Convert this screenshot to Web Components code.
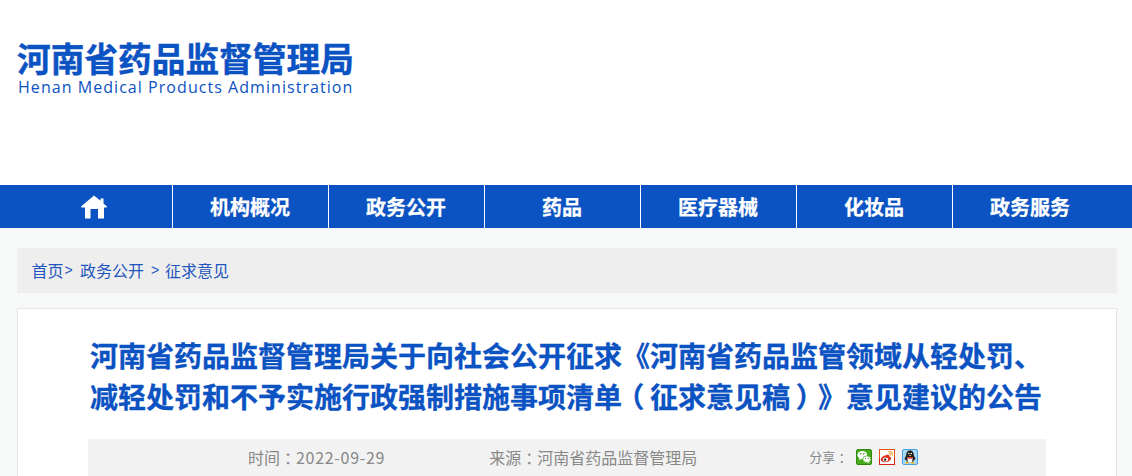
<!DOCTYPE html>
<html lang="zh">
<head>
<meta charset="utf-8">
<title>河南省药品监督管理局</title>
<style>
html, body { margin: 0; height: 476px; overflow: hidden; background: #f7f8f8; }
body { font-family: "Liberation Sans", "Noto Sans CJK SC", sans-serif; }
.fw { display: inline-block; width: 1em; text-align: center; font-feature-settings: "palt"; }
</style>
</head>
<body>
<site-logo></site-logo>
<main-nav>
  <nav-item home></nav-item>
  <nav-item>机构概况</nav-item>
  <nav-item>政务公开</nav-item>
  <nav-item>药品</nav-item>
  <nav-item>医疗器械</nav-item>
  <nav-item>化妆品</nav-item>
  <nav-item>政务服务</nav-item>
</main-nav>
<bread-crumb></bread-crumb>
<article-card>
  河南省药品监督管理局关于向社会公开征求《河南省药品监管领域从轻处罚、<br>减轻处罚和不予实施行政强制措施事项清单<span class="fw">（</span>征求意见稿<span class="fw">）</span>》意见建议的公告
</article-card>

<script>
const CJK = `"Noto Sans CJK SC", sans-serif`
// the colon sits in the left of its box in this font, the original has it centred
const COLON = `<span style="display:inline-block;width:1em;text-align:center;font-feature-settings:'palt'">：</span>`

class SiteLogo extends HTMLElement {
  constructor() {
    super()
    this.attachShadow({mode: 'open'})
    this.shadowRoot.innerHTML = `
<style>
:host { display: block; height: 185px; background: #fff; box-sizing: border-box; padding: 40px 0 0 17px; }
.cn { font: 700 33.7px/36px ${CJK}; color: #0b52c2; white-space: nowrap; -webkit-text-stroke: .4px #0b52c2; }
.en { font: 400 16px/18px "Open Sans", sans-serif; color: #0b52c2; margin: 2px 0 0 1px; letter-spacing: 1.05px; white-space: nowrap; }
</style>
<div class="cn">河南省药品监督管理局</div>
<div class="en">Henan Medical Products Administration</div>`
  }
}
customElements.define('site-logo', SiteLogo)

class MainNav extends HTMLElement {
  constructor() {
    super()
    this.attachShadow({mode: 'open'})
    this.shadowRoot.innerHTML = `
<style>
:host { display: flex; height: 43px; background: #0b52c2; }
</style>
<slot></slot>`
  }
}
customElements.define('main-nav', MainNav)

class NavItem extends HTMLElement {
  constructor() {
    super()
    this.attachShadow({mode: 'open'})
    this.shadowRoot.innerHTML = `
<style>
:host { display: flex; align-items: center; justify-content: center; box-sizing: border-box; width: 156px; padding-right: 1px; border-left: 1px solid #fff; color: #fff; font: 700 20px/43px ${CJK}; -webkit-text-stroke: .25px #fff; }
:host([home]) { width: 172px; padding: 0 0 0 16px; border-left: 0; }
svg { display: block; }
</style>
${this.hasAttribute('home') ? `<svg width="26" height="24" viewBox="0 0 26 24"><path fill="#fff" d="M13 .5 0 11.500.5 12.500H4V23.500H9.500V14H17V23.500H23V12.500H25.500L26 11.500 22.500 8.500V3.500H19.500V5.800Z"/></svg>` : `<slot></slot>`}`
  }
}
customElements.define('nav-item', NavItem)

class BreadCrumb extends HTMLElement {
  constructor() {
    super()
    this.attachShadow({mode: 'open'})
    this.shadowRoot.innerHTML = `
<style>
:host { display: flex; align-items: center; box-sizing: border-box; margin: 20px 15px 15px 17px; height: 45px; padding: 0 0 2px 14.500px; background: #eee; color: #1d55bd; font: 400 16px/24px ${CJK}; white-space: nowrap; }
.sep { font: 400 14px/24px "Liberation Sans", sans-serif; width: 8px; }
.a { margin-left: 1px; margin-right: 7.500px; }
.b { margin-left: 7px; margin-right: 6px; }
</style>
<span>首页</span><span class="sep a">&gt;</span><span>政务公开</span><span class="sep b">&gt;</span><span>征求意见</span>`
  }
}
customElements.define('bread-crumb', BreadCrumb)

class ArticleCard extends HTMLElement {
  constructor() {
    super()
    this.attachShadow({mode: 'open'})
    this.shadowRoot.innerHTML = `
<style>
:host { display: block; box-sizing: border-box; margin: 0 15px 0 17px; height: 168px; background: #fff; border: 1px solid #e6e6e6; border-bottom: 0; padding: 26px 70px 0; }
h1 { margin: 0 0 22px 2px; font: 700 28px/41px ${CJK}; color: #0b52c2; white-space: nowrap; text-spacing-trim: space-all; font-kerning: none; -webkit-text-stroke: .3px #0b52c2; }
</style>
<h1><slot></slot></h1>
<article-meta></article-meta>`
  }
}
customElements.define('article-card', ArticleCard)

class ArticleMeta extends HTMLElement {
  constructor() {
    super()
    this.attachShadow({mode: 'open'})
    this.shadowRoot.innerHTML = `
<style>
:host { display: flex; align-items: center; box-sizing: border-box; height: 37px; padding: 0 0 1px 160px; background: #f2f2f2; color: #888; font: 400 16px/36px ${CJK}; white-space: nowrap; text-spacing-trim: space-all; }
.date { letter-spacing: .7px; }
.src { margin-left: 104px; }
share-icons { margin-left: 112px; }
</style>
<span>时间${COLON}<span class="date">2022-09-29</span></span>
<span class="src">来源${COLON}河南省药品监督管理局</span>
<share-icons></share-icons>`
  }
}
customElements.define('article-meta', ArticleMeta)

class ShareIcons extends HTMLElement {
  constructor() {
    super()
    this.attachShadow({mode: 'open'})
    this.shadowRoot.innerHTML = `
<style>
:host { display: flex; align-items: center; font-size: 13px; color: #888; text-spacing-trim: space-all; }
span.label { margin-right: 8px; }
svg { display: block; margin-right: 7px; }
</style>
<span class="label">分享${COLON}</span>
<svg width="16" height="16" viewBox="0 0 16 16">
  <rect x=".5" y=".5" width="15" height="15" rx="1.500" fill="#46a81b" stroke="#2f8a0f"/>
  <ellipse cx="6.300" cy="6" rx="4.900" ry="4" fill="#fff"/>
  <path fill="#fff" d="M3.600 8.500 3 11.300l2.900-1.800z"/>
  <ellipse cx="10.800" cy="10.200" rx="4" ry="3.300" fill="#fff" stroke="#46a81b" stroke-width=".7"/>
  <path fill="#fff" d="M12.500 12.500l.9 1.900-2.400-1.400z"/>
  <circle cx="4.700" cy="4.800" r=".75" fill="#2f8a0f"/><circle cx="7.900" cy="4.800" r=".75" fill="#2f8a0f"/>
  <circle cx="9.400" cy="9.500" r=".6" fill="#2f8a0f"/><circle cx="12.200" cy="9.500" r=".6" fill="#2f8a0f"/>
</svg>
<svg width="16" height="16" viewBox="0 0 16 16">
  <rect x=".5" y=".5" width="15" height="15" fill="#fff" stroke="#e8501c"/>
  <path fill="none" stroke="#d91f12" d="M.5 9v6.500h15V9"/>
  <path fill="#e0301e" d="M6.600 6.200c2.600-1 4.200-.3 3.700 1.400 1.800.5 2 1.500 1.500 2.600-.8 1.800-3.300 3-5.700 3-2.200 0-4.300-1-4.300-2.800 0-1.500 1.900-3.500 4.800-4.200z"/>
  <ellipse cx="6.500" cy="10.500" rx="2.700" ry="2" fill="#fff"/>
  <circle cx="6.100" cy="10.600" r="1.200" fill="#222"/>
  <path fill="none" stroke="#f3a531" stroke-width="1.200" d="M9.500 2.600c2.500-.4 4.400 1.500 3.900 4M9.800 4.700c1.200-.2 1.900.6 1.700 1.700"/>
</svg>
<svg width="16" height="16" viewBox="0 0 16 16">
  <rect x=".5" y=".5" width="15" height="15" rx="1.500" fill="#a5d9f6" stroke="#4a9fe0"/>
  <path fill="#1b1b1b" d="M8 1.500c2.500 0 3.700 1.900 3.700 4.200 0 .7.300 1.200.8 2 .7 1.100 1 2.300.6 3.200-.3.300-.7-.1-1-.6-.2 1.100-.7 1.900-1.300 2.400H5.200c-.6-.5-1.100-1.300-1.300-2.400-.3.500-.7.900-1 .6-.4-.9-.1-2.100.6-3.200.5-.8.800-1.300.8-2C4.300 3.400 5.500 1.500 8 1.500z"/>
  <path fill="#fff" d="M5.700 8.300c1.500.6 3.100.6 4.600 0 .5 1.700.2 3.500-.5 4.700H6.200c-.7-1.200-1-3-.5-4.700z"/>
  <path fill="#e4342b" d="M4.900 7.700c2 .8 4.200.8 6.200 0l.2 1.100-1.200.5v1.200l-1-.9c-1 .2-2 .1-3-.2l-1.200-.6z"/>
  <path fill="#f5b31a" d="M6.300 6.100h3.400L8 7.300zM3.800 13h3l.3 1.500H3.300zM9.200 13h3l.5 1.500H8.900z"/>
  <circle cx="6.800" cy="4.500" r=".8" fill="#fff"/><circle cx="9.200" cy="4.500" r=".8" fill="#fff"/>
</svg>`
  }
}
customElements.define('share-icons', ShareIcons)
</script>
</body>
</html>
